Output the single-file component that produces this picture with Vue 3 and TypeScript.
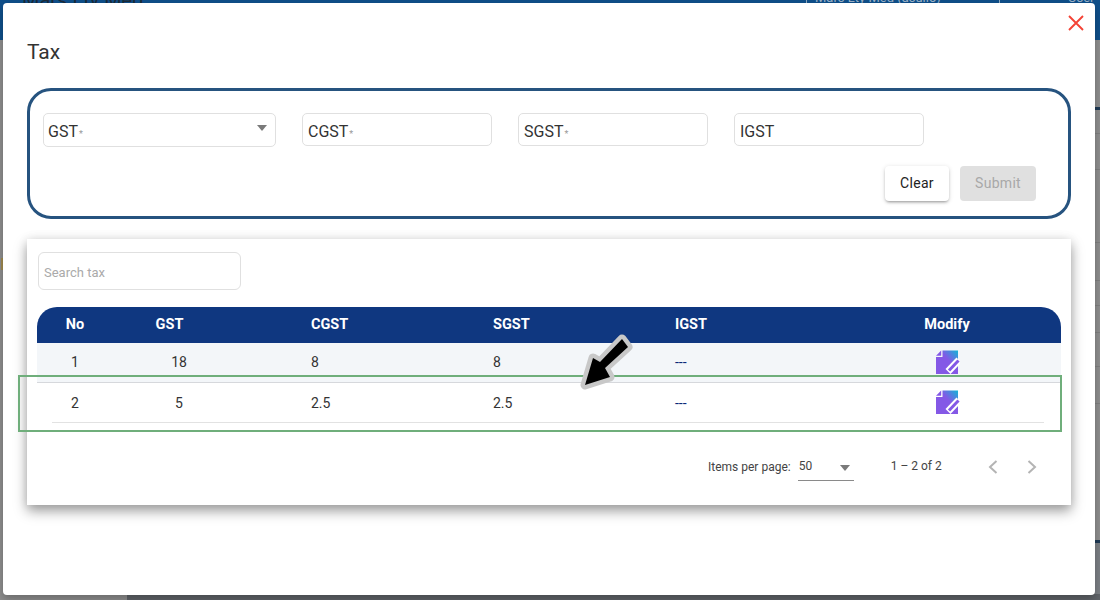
<script setup lang="ts">
interface Row { no: number; gst: string; cgst: string; sgst: string; igst: string }
const rows: Row[] = [
  { no: 1, gst: '18', cgst: '8', sgst: '8', igst: '---' },
  { no: 2, gst: '5', cgst: '2.5', sgst: '2.5', igst: '---' },
]
const faintRules: number[] = [133, 169, 242, 280, 305, 332, 366, 403]
</script>

<template>
  <div class="page">
    <div class="backdrop">
      <div class="bg-head">
        <span class="bg-title">Mars Lty Med</span>
        <span class="bg-cell">Mars Lty Med (asulio)</span>
        <span class="bg-user">User</span>
      </div>
      <div class="bg-rule r1"></div>
      <div v-for="y in faintRules" :key="y" class="bg-rule faint" :style="{ top: y + 'px' }"></div>
      <div class="bg-rule r2"></div>
      <div class="bg-tick"></div>
      <div class="bg-low"></div>
      <div class="bg-foot"></div>
    </div>

    <section class="modal">
      <svg class="close" width="16" height="16" viewBox="0 0 16 16">
        <path d="M1 1 L15 15 M15 1 L1 15" stroke="#f44336" stroke-width="1.9" fill="none" />
      </svg>
      <h1 class="title">Tax</h1>

      <form class="form-box" @submit.prevent>
        <div class="fields">
          <div class="field select">
            <span>GST</span><i>*</i>
            <b class="caret"></b>
          </div>
          <div class="field"><span>CGST</span><i>*</i></div>
          <div class="field"><span>SGST</span><i>*</i></div>
          <div class="field"><span>IGST</span></div>
        </div>
        <div class="actions">
          <button type="button" class="btn clear">Clear</button>
          <button type="button" class="btn submit" disabled>Submit</button>
        </div>
      </form>

      <div class="card">
        <div class="search">Search tax</div>
        <div class="table">
          <div class="row head">
            <span class="c-no">No</span>
            <span class="c-gst">GST</span>
            <span>CGST</span>
            <span>SGST</span>
            <span>IGST</span>
            <span class="c-mod">Modify</span>
          </div>
          <div v-for="r in rows" :key="r.no" class="row body" :class="{ shaded: r.no === 1 }">
            <span class="c-no">{{ r.no }}</span>
            <span class="c-gst">{{ r.gst }}</span>
            <span>{{ r.cgst }}</span>
            <span>{{ r.sgst }}</span>
            <span class="igst">{{ r.igst }}</span>
            <span class="c-mod">
              <svg width="25" height="25" viewBox="0 0 25 25">
                <defs>
                  <linearGradient :id="'g' + r.no" x1="0.35" y1="0.65" x2="1" y2="0">
                    <stop offset="0.35" stop-color="#8458e6" />
                    <stop offset="1" stop-color="#12b5d6" />
                  </linearGradient>
                </defs>
                <path d="M7.5 0.5 H23 V24 H1 V7 H7.5 Z" :fill="`url(#g${r.no})`" />
                <path d="M1 5.7 L6.2 0.5 V5.7 Z" fill="#8458e6" />
                <path d="M13 21.5 L24 10" stroke="#fff" stroke-width="7" fill="none" />
                <path d="M14 20.5 L23.5 10.5" stroke="#8458e6" stroke-width="3" fill="none" />
              </svg>
            </span>
          </div>
        </div>

        <div class="pager">
          <span class="per">Items per page:</span>
          <div class="per-select"><span>50</span><b class="caret dark"></b></div>
          <span class="range">1 – 2 of 2</span>
          <svg class="chev first" width="12" height="16" viewBox="0 0 12 16">
            <path d="M9.5 2 L3 8 L9.5 14" stroke="#b4b4b4" stroke-width="2" fill="none" />
          </svg>
          <svg class="chev" width="12" height="16" viewBox="0 0 12 16">
            <path d="M2.5 2 L9 8 L2.5 14" stroke="#b4b4b4" stroke-width="2" fill="none" />
          </svg>
        </div>
      </div>

      <div class="highlight"></div>
      <svg class="arrow" width="70" height="64" viewBox="0 0 70 64">
        <path d="M14 54 L22 27 L29 31 L51 8 L57 16 L34 37 L39 46 Z" fill="#000" stroke="#c8c8c8" stroke-width="9" stroke-linejoin="round" paint-order="stroke" />
      </svg>
    </section>
  </div>
</template>

<style>
html, body { margin: 0; background: #8c8c8c; }
</style>

<style scoped>
.page {
  position: relative;
  width: 1100px;
  height: 600px;
  overflow: hidden;
  font-family: Roboto, "Liberation Sans", sans-serif;
  color: #212121;
}
.backdrop { position: absolute; inset: 0; background: #8e8e8e; }
.bg-head {
  position: relative;
  height: 40px;
  background: #0f4f8a;
  color: #9db4c9;
  font-size: 13px;
  overflow: hidden;
}
.bg-title { position: absolute; left: 22px; top: -12px; color: #1c2a38; font-size: 20px; }
.bg-cell { position: absolute; left: 806px; width: 194px; top: -10px; height: 20px; padding-left: 8px; box-sizing: border-box; border-left: 1px solid #8fa9c0; border-right: 1px solid #8fa9c0; }
.bg-user { position: absolute; left: 1068px; top: -10px; }
.bg-rule { position: absolute; right: 0; width: 5px; }
.r1 { top: 107px; height: 3px; background: #1f3a55; }
.faint { height: 1px; background: #7f7f7f; }
.r2 { top: 540px; height: 3px; background: #1f3a55; }
.bg-tick { position: absolute; left: 1px; top: 258px; width: 2px; height: 12px; background: #a08a50; }
.bg-low { position: absolute; right: 0; top: 543px; bottom: 0; width: 5px; background: #7b7f84; }
.bg-foot { position: absolute; left: 127px; right: 0; bottom: 0; height: 6px; background: #5f6368; }

.modal {
  position: absolute;
  left: 3px;
  top: 3px;
  width: 1092px;
  height: 592px;
  box-sizing: border-box;
  padding: 0 24px;
  background: #fff;
  border-radius: 4px;
  box-shadow: 0 4px 8px rgba(0, 0, 0, .25);
}
.close { position: absolute; left: 1065px; top: 12px; }
.title {
  margin: 0;
  padding-top: 36px;
  height: 85px;
  box-sizing: border-box;
  font-size: 21px;
  line-height: 26px;
  font-weight: 400;
  color: #333;
}
.form-box {
  box-sizing: border-box;
  width: 1044px;
  height: 131px;
  padding: 22px 32px 0 13px;
  border: 3px solid #26537f;
  border-radius: 24px;
}
.fields { display: flex; gap: 26px; align-items: flex-start; }
.field {
  position: relative;
  box-sizing: border-box;
  width: 190px;
  height: 33px;
  padding-left: 5px;
  border: 1px solid #e0e0e0;
  border-radius: 5px;
  font-size: 16px;
  line-height: 35px;
  color: #333;
  white-space: nowrap;
}
.field.select { width: 233px; height: 34px; padding-left: 4px; line-height: 36px; }
.field i { font-style: normal; font-size: 9px; color: #999; margin-left: 1px; }
.caret {
  position: absolute;
  right: 8px;
  top: 11px;
  border: 5.5px solid transparent;
  border-top: 6px solid #7a7a7a;
  border-bottom: 0;
}
.actions { display: flex; justify-content: flex-end; gap: 11px; margin-top: 19px; }
.btn {
  height: 35px;
  padding: 0 0 2px;
  border: 0;
  border-radius: 4px;
  font-family: inherit;
  font-size: 14px;
  font-weight: 400;
  letter-spacing: .3px;
}
.clear {
  width: 64px;
  background: #fff;
  color: #222;
  box-shadow: 0 2px 3px -1px rgba(0,0,0,.35), 0 1px 5px rgba(0,0,0,.14);
}
.submit { width: 76px; background: #e0e0e0; color: #a8a8a8; }

.card {
  box-sizing: border-box;
  width: 1044px;
  height: 266px;
  margin-top: 20px;
  padding: 13px 10px 0 10px;
  background: #fff;
  box-shadow: 0 6px 12px rgba(0, 0, 0, .38), 0 0 10px rgba(0, 0, 0, .08);
}
.search {
  margin-left: 1px;
  box-sizing: border-box;
  width: 203px;
  height: 38px;
  padding-left: 5px;
  border: 1px solid #e0e0e0;
  border-radius: 6px;
  font-size: 13px;
  line-height: 40px;
  color: #aaa;
}
.table { margin-top: 17px; }
.row {
  display: grid;
  grid-template-columns: 76px 198px 182px 182px 172px 200px 14px;
  align-items: center;
}
.row > span { text-align: left; }
.row .c-no, .row .c-gst, .row .c-mod { text-align: center; }
.head .c-gst { width: 113px; }
.body .c-gst { width: 132px; }
.head {
  height: 36px;
  padding-bottom: 2px;
  box-sizing: border-box;
  background: #0f3780;
  border-radius: 20px 20px 0 0;
  color: #fff;
  font-size: 14.5px;
  font-weight: 700;
}
.body {
  position: relative;
  height: 40px;
  padding-bottom: 1px;
  box-sizing: border-box;
  font-size: 14px;
  color: #333;
}
.body.shaded { background: #f3f6f9; border-bottom: 1px solid #d6d8dc; }
.body:not(.shaded)::after {
  content: "";
  position: absolute;
  left: 15px;
  right: 17px;
  bottom: 0;
  height: 1px;
  background: #e2e2e2;
}
.c-mod svg { display: block; margin: 0 auto; }
.igst { color: #0b2a78; }

.pager {
  display: flex;
  align-items: center;
  margin-top: 27px;
  padding-left: 671px;
  height: 34px;
  font-size: 12px;
  color: #444;
  white-space: nowrap;
}
.per-select {
  position: relative;
  flex: none;
  box-sizing: border-box;
  width: 56px;
  height: 28px;
  margin-left: 7px;
  border-bottom: 1px solid #8a8a8a;
  line-height: 27px;
  padding-left: 1px;
}
.caret.dark { right: 4px; top: 12px; }
.range { margin-left: 37px; margin-top: -2px; }
.chev { flex: none; margin-right: 27px; }
.chev.first { margin-left: 45px; }

.highlight {
  position: absolute;
  left: 15px;
  top: 372px;
  width: 1044px;
  height: 57px;
  box-sizing: border-box;
  border: 2px solid #6fae7b;
  pointer-events: none;
}
.arrow { position: absolute; left: 568px; top: 328px; pointer-events: none; }
</style>
